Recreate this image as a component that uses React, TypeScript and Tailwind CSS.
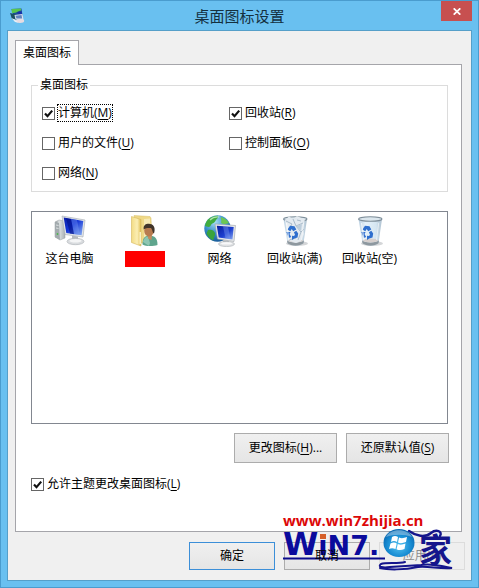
import { useState } from 'react';
import type { ReactNode } from 'react';

type IconProps = { className?: string };

function ComputerIcon({ className }: IconProps) {
  return (
    <svg viewBox="0 0 32 32" className={className} aria-hidden="true">
      <defs>
        <linearGradient id="pcScreen" x1="0" y1="0" x2="1" y2="1">
          <stop offset="0" stopColor="#0a1fa8" />
          <stop offset="0.45" stopColor="#1233d6" />
          <stop offset="1" stopColor="#8fb4f2" />
        </linearGradient>
        <linearGradient id="pcTower" x1="0" y1="0" x2="1" y2="0">
          <stop offset="0" stopColor="#7d858a" />
          <stop offset="0.4" stopColor="#dfe3e4" />
          <stop offset="1" stopColor="#a9b0b4" />
        </linearGradient>
      </defs>
      <path d="M1 7 L5 5 L11 6 L11 23 L6 25 L1 22 Z" fill="url(#pcTower)" stroke="#9aa1a5" strokeWidth="0.5" />
      <path d="M1 7 L5 8 L6 25 L1 22 Z" fill="#a3abae" />
      <path d="M2 10 L4.500 10.500 M2 13 L4.500 13.500" stroke="#e8ecee" strokeWidth="0.8" />
      <circle cx="3.500" cy="19" r="0.9" fill="#4cb84c" />
      <path d="M8 1 L31 5 L29 22 L11 19.500 Z" fill="#e3e6e9" stroke="#a5abb1" strokeWidth="0.6" />
      <path d="M9.700 2.600 L29.300 6 L27.700 20.300 L12.300 18 Z" fill="url(#pcScreen)" />
      <path d="M17 4 L23 5 L26 20 L20 19.200 Z" fill="#87a9f5" opacity="0.35" />
      <path d="M12 3.200 L17 4 L20 19.200 L16 18.600 Z" fill="#020f83" opacity="0.6" />
      <path d="M18 20.500 L24 21.500 L24 25 L18 25 Z" fill="#b6bbc0" />
      <ellipse cx="21.500" cy="26.500" rx="8.500" ry="3.200" fill="#d9dcdf" stroke="#a9aeb3" strokeWidth="0.6" />
      <ellipse cx="21.500" cy="25.700" rx="6" ry="1.700" fill="#f4f5f6" />
    </svg>
  );
}

function UserFolderIcon({ className }: IconProps) {
  return (
    <svg viewBox="0 0 32 32" className={className} aria-hidden="true">
      <defs>
        <linearGradient id="folderFront" x1="0" y1="0" x2="1" y2="0">
          <stop offset="0" stopColor="#f3dc85" />
          <stop offset="0.6" stopColor="#fbeeb4" />
          <stop offset="1" stopColor="#e0bf55" />
        </linearGradient>
      </defs>
      <path d="M5 0.500 L21 1.500 L22 3 L23 28 L8 28 Z" fill="#efd886" stroke="#d9bf6c" strokeWidth="0.5" />
      <path d="M15 4 L21 3.500 L21.500 26 L15 27 Z" fill="#f7e9b4" />
      <path d="M2.500 1.500 L12 4.500 L12 31 L2.500 27.500 Z" fill="url(#folderFront)" stroke="#d5b75a" strokeWidth="0.6" />
      <path d="M11.200 17 L11.200 29" stroke="#fffbe0" strokeWidth="1.2" />
      <path d="M13.500 29.500 C13.500 22 16.500 20.800 21 20.800 C25.500 20.800 28.500 23 28.500 30 C24 31.500 17 31.500 13.500 29.500 Z" fill="#5fa58d" />
      <path d="M14 27 C15 22.800 17 22 19 21.500 L21 28 L20 31 Z" fill="#8ec6b2" />
      <path d="M18.300 20 L23 20 L22.500 25 L19.500 24 Z" fill="#c38d60" />
      <ellipse cx="20" cy="15.700" rx="4.800" ry="5.700" fill="#b87b4f" />
      <path d="M14.700 14.500 C14 9 18.500 8.500 21 9 C25.500 9.300 26.500 14 25 18.500 C23.500 18 23.500 14.500 22 13 C20 13 17 12.500 14.700 14.500 Z" fill="#41342a" />
    </svg>
  );
}

function NetworkIcon({ className }: IconProps) {
  return (
    <svg viewBox="0 0 32 32" className={className} aria-hidden="true">
      <defs>
        <radialGradient id="netGlobe" cx="0.4" cy="0.25" r="0.85">
          <stop offset="0" stopColor="#a9ddf5" />
          <stop offset="0.5" stopColor="#358cc9" />
          <stop offset="1" stopColor="#114e8e" />
        </radialGradient>
        <linearGradient id="netScreen" x1="0" y1="0" x2="1" y2="1">
          <stop offset="0" stopColor="#0a1c9c" />
          <stop offset="0.55" stopColor="#1d3fd0" />
          <stop offset="1" stopColor="#8aabf0" />
        </linearGradient>
      </defs>
      <circle cx="13.500" cy="13.500" r="13.200" fill="url(#netGlobe)" />
      <path d="M4 4.500 C7 1.500 11 0.500 14 0.700 C15 3 12 4 11.500 6 C10 8.500 7.500 8 6.500 11 C4.500 13 2.500 11 1 11 C1.500 8 2.500 6 4 4.500 Z" fill="#41ad3e" />
      <path d="M4 15 C7 14 10 15 11 18 C11.500 21 9.500 22 9.500 25.500 C6 24 3.500 21 2.500 18.500 Z" fill="#3aa33b" />
      <path d="M17 2 C20.500 3 23.500 5 25 8 C22 9.500 18.500 9.500 17 7.500 C18 5.500 16.500 4 17 2 Z" fill="#6cc653" />
      <path d="M6 5 C8.500 2.500 12 1.500 15.500 2" stroke="#ddf6df" strokeWidth="1.100" fill="none" opacity="0.7" />
      <path d="M11 9 L31.500 10.500 L30 26.500 L13.500 24 Z" fill="#e7e9eb" stroke="#9aa0a6" strokeWidth="0.6" />
      <path d="M12.800 10.700 L29.700 12 L28.500 24.600 L14.700 22.600 Z" fill="url(#netScreen)" />
      <path d="M19 11.200 L24 11.600 L26.500 24.300 L21.500 23.600 Z" fill="#8fadf5" opacity="0.35" />
      <path d="M19 25 L25 26 L25 28 L19 28 Z" fill="#b3b8bd" />
      <ellipse cx="22.500" cy="29" rx="8" ry="2.600" fill="#dfe1e3" stroke="#a9aeb3" strokeWidth="0.6" />
      <ellipse cx="22.500" cy="28.400" rx="5.500" ry="1.200" fill="#f8f8f9" />
    </svg>
  );
}

function RecycleBinIcon({ className, full = false }: IconProps & { full?: boolean }) {
  return (
    <svg viewBox="0 0 32 32" className={className} aria-hidden="true">
      <defs>
        <linearGradient id="binGlass" x1="0" y1="0" x2="1" y2="0">
          <stop offset="0" stopColor="#b9cfe0" />
          <stop offset="0.3" stopColor="#e5f1fa" />
          <stop offset="0.75" stopColor="#d5e6f2" />
          <stop offset="1" stopColor="#adc0cf" />
        </linearGradient>
      </defs>
      <ellipse cx="18" cy="28.500" rx="11" ry="2.600" fill="#d4d6d8" />
      <path d="M4.500 4 L28 4 L24.500 28 C21 31.500 12 31.500 8.500 28 Z" fill="url(#binGlass)" />
      <path d="M8 25.500 C12 28 21 28 25 25.500 L24.500 28.300 C21 31.500 12 31.500 8.500 28.300 Z" fill="#8e989f" />
      <ellipse cx="16.500" cy="25.400" rx="7.500" ry="2" fill="#d6cfcd" />
      <ellipse cx="16.300" cy="4" rx="11.700" ry="2.300" fill="#dce7ee" stroke="#7d8d99" strokeWidth="1.100" />
      {full && (
        <g>
          <path d="M6 5 L10 1.500 L14 4 L18 1 L22 3 L26 4 L24 13 L25 19 L22 26 L17 28 L11 26 L8 19 Z" fill="#e3eaf0" />
          <path d="M7 6 L13 9 L10 14 M14 4 L17 11 L24 8 M17 11 L22 17 L19 25 M22 17 L25 14 M10 25 L17 23 M18 5 L22 6" stroke="#a4b6c5" strokeWidth="0.9" fill="none" />
          <path d="M17 11 L23 9 L22 16 Z" fill="#bccddb" />
        </g>
      )}
      <g fill="#2f6fce">
        <path d="M8.500 14.500 L11 10.800 L15.500 11.300 L17.300 14.500 L14.200 16.300 L12.700 14 L11.300 16.300 Z" />
        <path d="M7.300 17 L11.600 17 L10.500 19 L12.200 22 L9.900 23 Z" />
        <path d="M13 20.800 L13 25 L15.200 23.500 L18.500 22.500 L19.200 18.500 L17.300 15.800 L14.900 17.200 L16 19.700 L15 21 Z" />
      </g>
      <path d="M7.500 8 L10 25" stroke="#ffffff" strokeWidth="1.200" opacity="0.65" />
      <path d="M24.700 8 L22.500 25" stroke="#ffffff" strokeWidth="1" opacity="0.55" />
    </svg>
  );
}

function TitleIcon() {
  return (
    <svg viewBox="0 0 16 16" className="size-4" aria-hidden="true">
      <path d="M2.500 1 L12.500 0.500 L13.500 7.500 L4.500 8.500 Z" fill="#1d4d99" />
      <path d="M2.500 1 L12 0.500 L12 2.500 C9 3 7 5.500 3 5 Z" fill="#58c54d" />
      <path d="M8 4 L12.500 3.500 L13.300 7.500 L10 8 Z" fill="#1830a8" />
      <path d="M1 5 L7 6.500 L8 12 L3 11 Z" fill="#1c5063" />
      <path d="M5.500 7 L13.500 6 L14.500 12 L6.500 11.500 Z" fill="#dbe4ee" />
      <path d="M6.500 7.800 L12.500 7 L13.200 10.500 L7.500 10.500 Z" fill="#6184bd" />
      <ellipse cx="11" cy="13" rx="4.200" ry="1.900" fill="#e7dce2" />
      <path d="M2.500 10 L6 11.500 L9 14.500 L6 14 Z" fill="#e8eef5" />
    </svg>
  );
}

// Access key shown after a caption, e.g. (M)
function Key({ children }: { children: string }) {
  return <span>(<u className="underline-offset-2">{children}</u>)</span>;
}

type CheckProps = {
  id: string;
  checked: boolean;
  focused?: boolean;
  onChange: () => void;
  children: ReactNode;
};

function Check({ id, checked, focused, onChange, children }: CheckProps) {
  return (
    <div className="flex h-5 items-center">
      <span className="grid size-[13px] shrink-0 place-items-center">
        <input
          id={id}
          type="checkbox"
          checked={checked}
          onChange={onChange}
          className="col-start-1 row-start-1 size-[13px] appearance-none border border-[#666] bg-white"
        />
        {checked && (
          <svg viewBox="0 0 13 13" className="pointer-events-none col-start-1 row-start-1 size-[13px]" aria-hidden="true">
            <path d="M3 6.500 L5.500 9.200 L10.200 3.600" fill="none" stroke="#111" strokeWidth="2.200" />
          </svg>
        )}
      </span>
      <label
        htmlFor={id}
        className={`ml-0.5 border leading-4 whitespace-nowrap ${focused ? 'border-dotted border-black' : 'border-transparent'}`}
      >
        {children}
      </label>
    </div>
  );
}

function Watermark() {
  return (
    <div className="pointer-events-none absolute right-5 bottom-[15px] w-[176px]">
      <p className="pl-px font-['Open_Sans','Noto_Sans_CJK_SC',sans-serif] text-[15px] leading-4 font-bold text-[#dc0808]">www.win7zhijia.cn</p>
      <svg viewBox="0 0 176 44" className="h-11 w-[176px] overflow-visible" aria-label="WiN7之家">
        <defs>
          <radialGradient id="orb" cx="0.5" cy="0.6" r="0.6">
            <stop offset="0" stopColor="#55c4f2" />
            <stop offset="0.65" stopColor="#168bd2" />
            <stop offset="1" stopColor="#0a65ad" />
          </radialGradient>
        </defs>
        <text x="1" y="27" fontSize="32" fontFamily="DejaVu Sans, sans-serif" fontWeight="700" fill="#0a0a9c">
          W<tspan fontSize="27">iN7.</tspan>
        </text>
        <rect x="38" y="6" width="6" height="5" fill="#d6602a" />
        <path d="M1 30.500 H103" stroke="#0a0a8c" strokeWidth="2" />
        <path d="M123 34 C116 36 104 34 99 36 C95 39 101 40 108 39 L139 37 C149 35 160 38 170 40 C157 41 147 38 136 39 C122 42 106 42 98 40" fill="none" stroke="#15158c" strokeWidth="2" strokeLinecap="round" />
        <path d="M127 3 C134 8 143 10 149 5 C154 1 161 3 158 8" fill="none" stroke="#15158c" strokeWidth="2.400" strokeLinecap="round" />
        <ellipse cx="117" cy="15" rx="15.500" ry="14" fill="url(#orb)" />
        <path d="M104 9 C108 0 126 0 130 9 C122 6 112 6 104 9 Z" fill="#ffffff" opacity="0.35" />
        <g fill="#ffffff" transform="translate(1 2)">
          <path d="M109 7 Q112 5 115 7 L114 12 Q111 10 108 12 Z" />
          <path d="M116 7.500 Q119 9 124 7 L123 12 Q118 14 115 12.500 Z" />
          <path d="M107.500 13.500 Q111 11.500 113.700 13.500 L112.500 19 Q109 17.500 106 19 Z" />
          <path d="M114.800 14 Q118 15.500 122.500 13.500 L121.500 19 Q117 21 113.500 19.200 Z" />
        </g>
        <text x="137" y="34" fontSize="33" fontFamily="Noto Sans CJK SC, sans-serif" fontWeight="700" fill="#15158c">家</text>
      </svg>
    </div>
  );
}

const items = [
  { id: 'pc', label: '这台电脑', icon: <ComputerIcon className="size-8" /> },
  { id: 'user', label: '', icon: <UserFolderIcon className="size-8" /> },
  { id: 'network', label: '网络', icon: <NetworkIcon className="size-8" /> },
  { id: 'bin-full', label: '回收站(满)', icon: <RecycleBinIcon full className="size-8" /> },
  { id: 'bin-empty', label: '回收站(空)', icon: <RecycleBinIcon className="size-8" /> },
];

const options = [
  { id: 'computer', label: '计算机', key: 'M' },
  { id: 'recycle', label: '回收站', key: 'R' },
  { id: 'files', label: '用户的文件', key: 'U' },
  { id: 'control', label: '控制面板', key: 'O' },
  { id: 'net', label: '网络', key: 'N' },
];

export default function App() {
  const [checked, setChecked] = useState<Record<string, boolean>>({
    computer: true,
    recycle: true,
    theme: true,
  });

  const toggle = (id: string) => setChecked((prev) => ({ ...prev, [id]: !prev[id] }));

  return (
    <div className="relative flex min-h-screen flex-col border border-[#4a9cce] bg-[#69c0f0] font-['Open_Sans','Noto_Sans_CJK_SC',sans-serif] text-xs text-black">
      <header className="grid h-[29px] grid-cols-[1fr_auto_1fr] items-center">
        <div className="pl-2">
          <TitleIcon />
        </div>
        <h1 className="text-[15px] leading-5 text-[#14303f]">桌面图标设置</h1>
        <button aria-label="关闭" className="mr-1.5 grid h-5 w-[31px] place-items-center self-start justify-self-end bg-[#c75050]">
          <svg viewBox="0 0 8 7" className="h-[7px] w-2" aria-hidden="true">
            <path d="M0.700 0.300 L7.300 6.700 M7.300 0.300 L0.700 6.700" stroke="#fff" strokeWidth="1.700" />
          </svg>
        </button>
      </header>

      <main className="mx-1.5 mb-1.5 flex flex-1 flex-col border border-[#559fc9] bg-[#f0f0f0] pt-[9px] pb-2.5 pl-[7px]">
        <div role="tablist" className="flex">
          <button role="tab" aria-selected="true" className="z-10 -mb-px h-[25px] border border-b-0 border-[#a5a5aa] bg-white px-[7px] leading-4">
            桌面图标
          </button>
        </div>

        <section role="tabpanel" className="mr-[9px] flex flex-1 flex-col border border-[#a5a5aa] bg-white pt-3 pr-[13px] pb-[37px] pl-[15px]">
          <fieldset className="border border-[#dcdcdc] pt-2.5 pr-[31px] pb-2 pl-2.5">
            <legend className="-ml-1 px-0.5 leading-4">桌面图标</legend>
            <div className="grid grid-cols-2 gap-y-2.5">
              {options.map((o) => (
                <Check
                  key={o.id}
                  id={o.id}
                  checked={!!checked[o.id]}
                  focused={o.id === 'computer'}
                  onChange={() => toggle(o.id)}
                >
                  {o.label}<Key>{o.key}</Key>
                </Check>
              ))}
            </div>
          </fieldset>

          <ul className="mt-[19px] flex min-h-[200px] flex-1 border border-[#828790] pt-[3px]">
            {items.map((item) => (
              <li key={item.id} className="flex w-[75px] flex-col items-center gap-1 whitespace-nowrap">
                {item.icon}
                {item.label ? (
                  <span className="leading-4">{item.label}</span>
                ) : (
                  <span className="h-4 w-10 bg-[#ff0000]" />
                )}
              </li>
            ))}
          </ul>

          <div className="mt-[9px] -mr-px mb-[11px] flex justify-end gap-[9px]">
            <button className="h-[30px] w-[103px] border border-[#acacac] bg-linear-to-b from-[#f0f0f0] to-[#e5e5e5]">
              更改图标<Key>H</Key>...
            </button>
            <button className="h-[30px] w-[103px] border border-[#acacac] bg-linear-to-b from-[#f0f0f0] to-[#e5e5e5]">
              还原默认值<Key>S</Key>
            </button>
          </div>

          <Check id="theme" checked={!!checked.theme} onChange={() => toggle('theme')}>
            允许主题更改桌面图标<Key>L</Key>
          </Check>
        </section>

        <footer className="mt-2.5 mr-1.5 flex justify-end gap-[9px]">
          <button className="h-7 w-[86px] border border-[#3c8fd8] bg-linear-to-b from-[#f0f0f0] to-[#e5e5e5]">确定</button>
          <button className="h-7 w-[86px] border border-[#acacac] bg-linear-to-b from-[#f0f0f0] to-[#e5e5e5]">
            <span className="relative z-10">取消</span>
          </button>
          <button disabled className="h-7 w-[86px] border border-[#dcdcdc] bg-[#efefef] text-[#8c8c8c]">
            应用<Key>A</Key>
          </button>
        </footer>
      </main>

      <Watermark />
    </div>
  );
}
